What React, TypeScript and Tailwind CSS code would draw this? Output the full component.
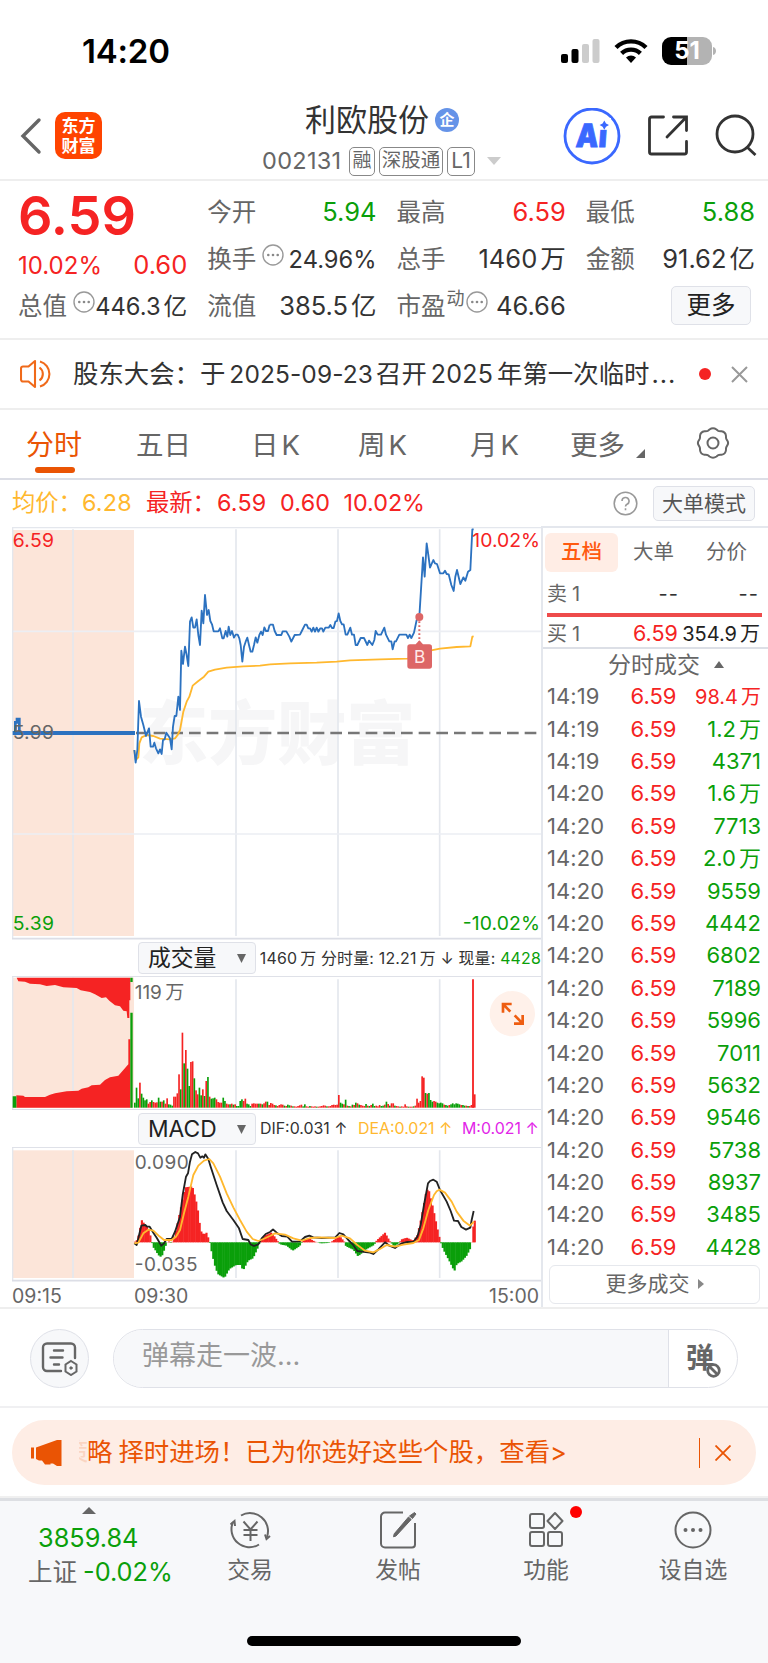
import type { ReactNode } from "react"

type Trade = { time: string; price: string; volume: string; up?: boolean }

const trades: Trade[] = [
  { time: "14:19", price: "6.59", volume: "98.4万", up: true },
  { time: "14:19", price: "6.59", volume: "1.2万" },
  { time: "14:19", price: "6.59", volume: "4371" },
  { time: "14:20", price: "6.59", volume: "1.6万" },
  { time: "14:20", price: "6.59", volume: "7713" },
  { time: "14:20", price: "6.59", volume: "2.0万" },
  { time: "14:20", price: "6.59", volume: "9559" },
  { time: "14:20", price: "6.59", volume: "4442" },
  { time: "14:20", price: "6.59", volume: "6802" },
  { time: "14:20", price: "6.59", volume: "7189" },
  { time: "14:20", price: "6.59", volume: "5996" },
  { time: "14:20", price: "6.59", volume: "7011" },
  { time: "14:20", price: "6.59", volume: "5632" },
  { time: "14:20", price: "6.59", volume: "9546" },
  { time: "14:20", price: "6.59", volume: "5738" },
  { time: "14:20", price: "6.59", volume: "8937" },
  { time: "14:20", price: "6.59", volume: "3485" },
  { time: "14:20", price: "6.59", volume: "4428" },
]

// chart units: 3 per css pixel, the second half of the session starts at x = 810
const HALF = "translate(810 0)"

const priceA = "403,690 407,728 412,690 417,543 423,590 430,615 438,648 447,625 452,680 459,680 463,668 468,685 475,700 480,688 485,702 489,660 494,658 499,638 510,655 515,688 519,620 524,588 529,588 535,530 540,570 544,392 549,432 555,380 560,405 565,438 570,305 575,292 580,323 585,323 590,298 595,345 600,375 605,272 610,310 615,225 621,285 626,270 631,303 636,313 641,334 655,334 660,325 667,355 671,355 677,333 682,350 686,320 691,345 696,333 702,353 707,344 713,344 718,355 722,375 727,425 732,380 737,365 742,353 747,375 752,395 757,395 762,375 767,352 772,368 778,345 783,335 788,345 793,322 798,333 804,333 809,314"
const priceB = "-1,314 9,314 14,333 20,345 34,345 38,334 49,334 58,350 64,365 74,345 90,344 97,330 105,314 110,314 115,325 120,325 125,335 130,323 135,335 140,323 145,335 151,325 156,325 160,335 166,323 176,323 181,315 186,324 191,324 196,305 201,303 206,280 211,303 216,313 221,313 227,344 232,344 241,323 246,344 252,344 257,375 262,375 272,354 282,354 292,375 297,362 307,375 313,360 317,333 323,344 333,344 343,323 348,344 358,364 364,364 368,388 374,364 378,364 388,344 409,344 414,354 419,344 424,354 432,338 440,300 448,290 459,112 464,170 470,70 475,105 480,143 490,120 495,130 501,132 510,160 520,160 525,152 530,162 536,163 544,195 551,213 556,170 561,150 571,192 580,172 586,182 594,155 601,150 607,28 611,28"
const avgA = "403,690 407,720 415,712 418,670 425,652 440,645 460,648 480,656 510,658 525,655 533,645 540,630 550,575 560,545 568,530 578,497 595,483 612,470 625,455 645,449 680,443 730,439 780,437 810,433"
const avgB = "0,433 60,430 140,428 200,425 240,421 330,418 412,416 450,412 470,398 480,392 510,386 560,381 601,379 607,350 611,349"

const difA = "403,925 410,930 416,905 424,872 436,870 441,875 449,875 460,893 470,908 484,932 492,925 500,912 515,912 525,890 540,845 548,780 558,725 564,715 570,680 576,658 586,651 594,655 601,668 607,664 612,668 616,658 625,672 632,695 650,750 668,802 680,828 700,855 717,880 728,912 745,915 752,928 762,933 775,928 785,910 797,897 810,891"
const difB = "0,891 9,883 20,893 35,903 52,905 66,920 90,919 105,906 118,902 130,907 155,909 196,907 208,894 220,898 235,915 248,928 262,948 275,950 300,953 310,957 325,943 345,922 358,932 375,939 395,925 412,921 430,921 442,905 452,870 462,810 474,745 480,738 490,734 500,740 510,765 530,800 542,828 552,857 564,858 574,876 588,884 601,878 605,855 611,828"
const deaA = "403,925 415,923 430,895 445,884 460,887 478,904 492,915 515,915 528,905 540,885 552,835 565,785 580,720 595,692 612,677 628,672 640,685 660,725 680,775 700,817 720,855 740,890 758,912 775,918 790,912 810,903"
const deaB = "0,903 15,895 45,899 70,910 95,917 120,909 150,907 195,909 215,902 240,910 262,930 285,947 310,952 330,942 350,930 375,935 400,929 430,924 447,915 460,880 475,825 492,780 500,769 508,764 525,773 545,800 560,830 580,857 600,872 612,860"

// one entry per minute, negative = falling minute
const volumes = [
  -15, -60, -28, 75, -42, -30, -22, -25, 12, 17, -22, 17, 15, 16, -30, -18, 18, -22, 12, 28,
  -10, -9, -6, 33, 33, 43, 100, -55, 225, -133, 173, -117, -65, 137, 139, -88, 52, 40, -60, -37,
  55, -35, 80, -92, 33, -27, -28, -30, 25, 17, 15, 15, -30, -20, 12, 10, -10, 12, -9, 10,
  -5, -5, -20, -25, 20, 27, -12, -10, -5, 12, 13, 12, 12, -12, 12, -10, 13, 18, -18, 8,
  14, 12, 8, -7, 5, 8, 10, 9, -6, 5, -9, -7, 6, -4, 4, 3, 5, 7, 9, -4,
  -10, 4, 3, -5, 4, 3, 4, -3, 3, 4, 5, 7, 6, -4, 4, 5, 8, 9, 8, 9,
  38, -15, -12, 10, -24, 6, -5, 4, -9, 8, -15, 13, -9, 8, 6, 5, -11, 6, -5, 8,
  -12, -5, 6, 4, 8, -5, -6, 9, -18, 11, -6, 13, 13, -6, 5, 4, -3, 4, 3, 10,
  4, -3, 3, 3, -4, 6, 27, 15, 20, 94, 90, -44, 42, -44, -23, -18, 20, 18, -15, -13,
  -15, -13, 9, -8, -6, 8, -10, -13, -10, -13, -12, -10, 8, -8, -6, 6, -5, 5, 8, 10,
]

const macdKeys: [number, number][] = [
  [405, 2], [412, 8], [419, 35], [424, 68], [429, 62], [435, 50], [440, 48], [445, 42], [450, 25], [455, 1], [460, -15],
  [465, -22], [475, -38], [480, -43], [485, -43], [490, -30], [497, -10], [504, 5], [515, -4], [521, 12], [530, 45],
  [536, 75], [546, 120], [556, 165], [577, 168], [582, 150], [592, 108], [602, 35], [612, 22], [618, 32], [628, 5],
  [633, -20], [643, -65], [653, -95], [673, -107], [688, -80], [708, -68], [722, -68], [729, -85], [744, -55],
  [759, -48], [774, -15], [780, 3], [794, 20], [815, 30], [830, 8], [840, -6], [860, -10], [878, -25], [898, -12],
  [908, 3], [925, 13], [945, 2], [962, -3], [985, -2], [995, 2], [1018, 20], [1032, 3], [1038, -12], [1060, -22],
  [1074, -42], [1100, -20], [1122, -8], [1130, 6], [1155, 29], [1169, 4], [1182, -12], [1196, -3], [1205, 9],
  [1220, 14], [1240, 5], [1252, 22], [1264, 75], [1278, 150], [1285, 163], [1300, 100], [1315, 28], [1322, 0],
  [1330, -22], [1350, -60], [1363, -87], [1370, -65], [1385, -57], [1400, -40], [1414, -12], [1417, 35], [1424, 65],
]

function macdBars() {
  const bars: { x: number; v: number }[] = []
  for (let x = 405; x < 1422; x += 5.1) {
    const n = macdKeys.findIndex(([kx]) => kx > x)
    if (n < 1) continue
    const [x0, v0] = macdKeys[n - 1]
    const [x1, v1] = macdKeys[n]
    bars.push({ x, v: v0 + ((v1 - v0) * (x - x0)) / (x1 - x0) })
  }
  bars.push({ x: 1424, v: 65 })
  return bars
}

// number followed by a Chinese unit with a small gap
function Num({ children }: { children: string }) {
  const m = children.match(/^(.*?)([万亿])$/)
  if (!m) return <>{children}</>
  return (
    <>
      {m[1]}
      <span className="ml-[3px]">{m[2]}</span>
    </>
  )
}

function Dots({ className = "" }: { className?: string }) {
  return (
    <svg className={className} width="22" height="22" viewBox="0 0 22 22" fill="none" stroke="#999" strokeWidth="1.4">
      <circle cx="11" cy="11" r="10" />
      <g fill="#888" stroke="none">
        <circle cx="6.3" cy="11" r="1.3" />
        <circle cx="11" cy="11" r="1.3" />
        <circle cx="15.7" cy="11" r="1.3" />
      </g>
    </svg>
  )
}

function StatusBar() {
  return (
    <div className="flex h-[90px] justify-between pr-[51px] pl-[82px]">
      <span className="mt-[31px] text-[33px] leading-10 font-semibold tracking-[-0.2px] text-black">14:20</span>
      <div className="mt-[37px] flex h-7">
        <svg width="39" height="28" viewBox="0 0 39 28">
          <rect x="0" y="17" width="7" height="9" rx="2" />
          <rect x="10.5" y="12" width="7" height="14" rx="2" />
          <rect x="21" y="7" width="7" height="19" rx="2" fill="#ccc" />
          <rect x="31.5" y="2" width="7" height="24" rx="2" fill="#ccc" />
        </svg>
        <svg className="ml-[14px]" width="34" height="28" viewBox="0 0 34 28" fill="none" stroke="#000" strokeWidth="4.4">
          <path d="M2 10.5a21.5 21.5 0 0 1 30 0" />
          <path d="M7.6 16.4a13.6 13.6 0 0 1 18.8 0" />
          <path d="M17 26l-5-5.4a7.2 7.2 0 0 1 10 0z" fill="#000" stroke="none" />
        </svg>
        <div className="ml-[14px] flex h-7 w-[50px] items-center justify-center rounded-[9px] bg-[linear-gradient(90deg,#000_51%,#b3b3b3_51%)] text-[24px] font-bold text-white">
          51
        </div>
        <svg className="ml-[1px]" width="4" height="28" viewBox="0 0 4 28">
          <path d="M0 10c4 1 4 7 0 8z" fill="#b3b3b3" />
        </svg>
      </div>
    </div>
  )
}

function Header() {
  return (
    <div className="flex h-[91px] border-b-2 border-[#eee] pl-5">
      <svg className="mt-[27px]" width="22" height="38" viewBox="0 0 22 38" fill="none" stroke="#666" strokeWidth="3.4">
        <path d="M19 3L3 19l16 16" strokeLinecap="round" />
      </svg>
      <div className="mt-[22px] ml-[13px] flex h-[47px] w-[47px] flex-col items-center justify-center rounded-[10px] bg-[#ff4400] text-[17px] leading-[20px] font-bold text-white">
        <span>东方</span>
        <span>财富</span>
      </div>
      <div className="ml-[160px] w-[241px]">
        <div className="mt-[9px] ml-[43px] flex h-[42px] items-center">
          <span className="text-[31px] leading-10 whitespace-nowrap text-[#333]">利欧股份</span>
          <span className="ml-[6px] flex h-6 w-6 items-center justify-center rounded-full bg-[#6593e8] text-[15px] font-bold text-white">企</span>
        </div>
        <div className="mt-[5px] flex h-[30px] items-center text-[#666]">
          <span className="w-[87px] text-[23.5px] tracking-[0.3px]">002131</span>
          <span className="flex h-[29px] w-[26px] items-center justify-center rounded-[5px] border-[1.5px] border-[#888] text-[19px]">融</span>
          <span className="ml-1 flex h-[29px] w-[64px] items-center justify-center rounded-[5px] border-[1.5px] border-[#888] text-[19.5px] whitespace-nowrap">深股通</span>
          <span className="ml-1 flex h-[29px] w-[28px] items-center justify-center rounded-[5px] border-[1.5px] border-[#888] text-[21px]">L1</span>
          <svg className="ml-[12px]" width="14" height="8" viewBox="0 0 14 8">
            <path d="M0 0h14L7 8z" fill="#ccc" />
          </svg>
        </div>
      </div>
      <svg className="mt-[18px] ml-[60px] font-['Inter',sans-serif]" width="58" height="58" viewBox="0 0 58 58">
        <circle cx="29" cy="28" r="27" fill="none" stroke="#3a68ff" strokeWidth="2.8" />
        <text x="15" y="38.600" fontSize="32" fontWeight="900" textLength="31" lengthAdjust="spacingAndGlyphs" fill="#3a68ff" stroke="#3a68ff" strokeWidth=".8" transform="skewX(-4)">Ai</text>
        <rect x="34" y="10" width="14" height="11.800" fill="#fff" />
        <path d="M41.300 12.500l1.700 2.900 3 1.700-3 1.700-1.700 2.900-1.700-2.900-3-1.700 3-1.700z" fill="#3a68ff" />
      </svg>
      <svg className="mt-[24px] ml-[26px]" width="42" height="42" viewBox="0 0 42 42" fill="none" stroke="#333" strokeWidth="2.8" strokeLinecap="round">
        <path d="M16.500 3H4.500a2 2 0 0 0-2 2v33a2 2 0 0 0 2 2h33a2 2 0 0 0 2-2V27.500" />
        <path d="M26.500 3h13V16.500M39 3.500L20 23" />
      </svg>
      <svg className="mt-[24px] ml-[26px]" width="42" height="42" viewBox="0 0 42 42" fill="none" stroke="#333" strokeWidth="2.8">
        <circle cx="20" cy="20" r="18" />
        <path d="M32 33L40.500 41" />
      </svg>
    </div>
  )
}

type CellProps = { label: ReactNode; children: string; color?: string; size?: string }

function Cell({ label, children, color = "text-[#333]", size = "text-[25.5px]" }: CellProps) {
  return (
    <div className="flex h-[47px] items-center justify-between whitespace-nowrap">
      <span className="flex text-[24.5px] text-[#666]">{label}</span>
      <span className={size + " " + color}>
        <Num>{children}</Num>
      </span>
    </div>
  )
}

function Quote() {
  return (
    <div className="grid h-[159px] grid-cols-4 gap-x-5 border-b-2 border-[#eee] pt-[8px] pr-[13px] pl-[18px]">
      <div>
        <div className="flex h-[52px] items-center text-[54px] font-semibold text-[#f52323]">6.59</div>
        <div className="flex h-[42px] items-center justify-between pt-[7px] text-[25.5px] text-[#f52323]">
          <span className="text-[24px]">10.02%</span>
          <span>0.60</span>
        </div>
        <Cell size="text-[23.7px]" label={<>总值<Dots className="mt-[3px] ml-[6px]" /></>}>446.3亿</Cell>
      </div>
      <div>
        <Cell label="今开" color="text-[#0a9f0a]">5.94</Cell>
        <Cell size="text-[23.7px]" label={<>换手<Dots className="mt-[3px] ml-[6px]" /></>}>24.96%</Cell>
        <Cell label="流值">385.5亿</Cell>
      </div>
      <div>
        <Cell label="最高" color="text-[#f52323]">6.59</Cell>
        <Cell label="总手">1460万</Cell>
        <Cell label={<>市盈<sup className="top-0 mt-[-1px] ml-[1px] text-[18px] leading-6">动</sup><Dots className="mt-[3px] ml-[1px]" /></>}>46.66</Cell>
      </div>
      <div>
        <Cell label="最低" color="text-[#0a9f0a]">5.88</Cell>
        <Cell label="金额">91.62亿</Cell>
        <button className="mt-[3px] mr-[4px] ml-auto flex h-[39px] w-[80px] items-center justify-center rounded-[5px] border-[1.5px] border-[#dfe1e8] bg-[#f7f8fa] text-[24.500px] text-[#222]">更多</button>
      </div>
    </div>
  )
}

function Notice() {
  return (
    <div className="flex h-[70px] items-center border-b-2 border-[#eee] pl-5">
      <svg width="33" height="30" viewBox="0 0 33 30" fill="none" stroke="#f06a1a" strokeWidth="2.1" strokeLinejoin="round">
        <path d="M15 2v26l-6.500-5.500H3a2 2 0 0 1-2-2v-11a2 2 0 0 1 2-2h5.500z" />
        <path d="M19.500 8.500a8 8 0 0 1 0 13M20 2.500a13 13 0 0 1 0 25" />
      </svg>
      <p className="ml-[20px] w-[606px] text-[25.400px] whitespace-nowrap text-[#333]">
        股东大会：于<span className="mr-[3px] ml-[4px] text-[24.500px] tracking-[0.1px]">2025-09-23</span>召开<span className="mx-[4px] text-[25px] tracking-[0.2px]">2025</span>年第一次临时<span className="ml-[2px] tracking-[1px]">...</span>
      </p>
      <span className="ml-[20px] h-3 w-3 rounded-full bg-[#f52323]" />
      <svg className="ml-[20px]" width="17" height="17" viewBox="0 0 17 17" stroke="#999" strokeWidth="2">
        <path d="M1 1l15 15M16 1L1 16" />
      </svg>
    </div>
  )
}

function Tabs() {
  return (
    <div className="flex h-[70px] border-b-2 border-[#dcdee6] text-[27.500px] whitespace-nowrap text-[#666]">
      <div className="ml-[26px] flex w-[110px] flex-col text-[#ea5404]">
        <span className="mt-[15px] text-[28px] leading-10">分时</span>
        <span className="mt-[2px] ml-[9px] h-[6px] w-10 rounded-full bg-[#ea5404]" />
      </div>
      <span className="mt-[15px] w-[115px] leading-10">五日</span>
      <span className="mt-[15px] w-[107px] leading-10">日<span className="ml-[3px]">K</span></span>
      <span className="mt-[15px] w-[112px] leading-10">周<span className="ml-[3px]">K</span></span>
      <span className="mt-[15px] w-[100px] leading-10">月<span className="ml-[3px]">K</span></span>
      <span className="mt-[15px] w-[66px] leading-10">更多</span>
      <svg className="mt-[39px]" width="9" height="9" viewBox="0 0 9 9">
        <path d="M9 0v9H0z" fill="#666" />
      </svg>
      <svg className="mt-[16px] ml-[51px]" width="34" height="34" viewBox="0 0 34 34" fill="none" stroke="#666" strokeWidth="2">
        <path d="M13.500 3.500q3.500-2.500 7 0l1.500 1.300q1 .7 3.500.5 4 .5 4.500 4.700-.3 2.500 1 4.200 2.200 2.800 0 5.600-1.300 1.700-1 4.200-.5 4.200-4.500 4.700-2.500-.2-3.500.5l-1.500 1.300q-3.500 2.500-7 0L12 29.200q-1-.7-3.500-.5-4-.5-4.500-4.700.3-2.500-1-4.200-2.200-2.800 0-5.600 1.300-1.700 1-4.200.5-4.200 4.500-4.700 2.500.2 3.500-.5z" strokeLinejoin="round" />
        <circle cx="17" cy="17" r="5.500" />
      </svg>
    </div>
  )
}

function PriceInfo() {
  return (
    <div className="flex h-[47px] items-center pr-[13px] pl-3 text-[23.300px] whitespace-nowrap text-[#f52323]">
      <span className="w-[70px] text-[#ffb82e]">均价：</span>
      <span className="w-[64px] tracking-[0.200px] text-[#ffb82e]">6.28</span>
      <span className="w-[71px]">最新：</span>
      <span className="w-[63px] tracking-[0.200px]">6.59</span>
      <span className="w-[63.500px] tracking-[0.200px]">0.60</span>
      <span>10.02%</span>
      <svg className="ml-auto" width="25" height="25" viewBox="0 0 25 25" fill="none" stroke="#999" strokeWidth="1.6">
        <circle cx="12.500" cy="12.500" r="11.300" />
        <path d="M9 10a3.500 3.500 0 1 1 5 3.200q-1.500.8-1.500 2.300M12.500 17.300v2" />
      </svg>
      <button className="ml-[15px] flex h-[35px] w-[102px] items-center justify-center rounded-[5px] border-[1.5px] border-[#dfe1e8] bg-[#f7f8fa] text-[21px] text-[#555]">大单模式</button>
    </div>
  )
}

function PriceChart() {
  return (
    <svg className="block font-['Inter','Noto_Sans_CJK_SC',sans-serif]" width="529" height="413" viewBox="36 21 1587 1239">
      <rect x="38" y="30" width="364" height="1218" fill="#fce5d9" />
      <text x="418" y="716" fontSize="207" fontWeight="900" fill="#f6f6f7">东方财富</text>
      <g stroke="#e4e7ed" strokeWidth="5">
        <path d="M219 28V1248M708 28V1248M1014 28V1248M1319 28V1248" />
        <path d="M36 334H1626M36 942H1626" stroke="#eceef3" />
        <path d="M36 23H1626M38 23V1257" strokeWidth="4" />
        <path d="M36 1256H1626" stroke="#dcdee6" />
      </g>
      <path d="M408 639H1614" stroke="#777" strokeWidth="7" strokeDasharray="35 18" />
      <g fill="none" strokeWidth="5.500" strokeLinejoin="round">
        <polyline points={avgA} stroke="#ffb82e" />
        <polyline points={avgB} stroke="#ffb82e" transform={HALF} />
        <polyline points={priceA} stroke="#2c72c0" />
        <polyline points={priceB} stroke="#2c72c0" transform={HALF} />
      </g>
      <path d="M38 639H405" stroke="#2c72c0" strokeWidth="12" />
      <path d="M46 639V607h5V597h7V634" stroke="#2c72c0" strokeWidth="8" fill="none" />
      <path d="M1258 292V365" stroke="#dd6666" strokeWidth="6" strokeDasharray="5 7" />
      <circle cx="1258" cy="291" r="12" fill="#dd6666" />
      <path d="M1230 373h17l11-12 11 12h19q8 0 8 8v57q0 8-8 8h-58q-8 0-8-8v-57q0-8 8-8z" fill="#dd6666" />
      <text x="1259" y="428" fontSize="52" fill="#ffe9e9" textAnchor="middle">B</text>
      <g fontSize="58">
        <text x="38" y="80" fill="#f52323" textLength="124">6.59</text>
        <text x="38" y="657" fill="#666" textLength="124">5.99</text>
        <text x="38" y="1231" fill="#0a9f0a" textLength="124">5.39</text>
        <text x="1620" y="80" fill="#f52323" textAnchor="end" textLength="203">10.02%</text>
        <text x="1620" y="1231" fill="#0a9f0a" textAnchor="end" textLength="232">-10.02%</text>
      </g>
    </svg>
  )
}

function IndicatorBar({ name, className, children }: { name: string; className: string; children: ReactNode }) {
  return (
    <div className={"flex items-center border-b border-[#dfe1e8] pl-[126px] whitespace-nowrap " + className}>
      <button className="flex h-8 w-[118px] items-center justify-between rounded-[4px] border-[1.5px] border-[#dfe1e8] bg-[#f7f8fa] pt-[1px] pr-[9px] pl-[9px] text-[22.800px] text-[#222]">
        {name}
        <svg width="9" height="9" viewBox="0 0 9 9">
          <path d="M0 0h9L4.500 9z" fill="#666" />
        </svg>
      </button>
      {children}
    </div>
  )
}

function VolumeChart() {
  return (
    <svg className="block font-['Inter','Noto_Sans_CJK_SC',sans-serif]" width="529" height="133" viewBox="36 125 1587 399">
      <rect x="38" y="127" width="364" height="390" fill="#fce5d9" />
      <path d="M219 127V517M708 132V517M1014 132V517M1319 132V517" stroke="#e4e7ed" strokeWidth="5" />
      <path d="M38 125V523" stroke="#e4e7ed" strokeWidth="4" />
      <path d="M50 127L55 138 75 139 90 145 120 147 140 152 165 149 190 156 230 158 242 165 270 170 285 177 305 188 318 186 328 196 345 210 360 213 370 226 380 228 382 248H388V195H391V127z" fill="#f52323" />
      <path d="M49 480L70 481 75 485H135L150 478 165 474 200 468 235 466 245 460 265 456 275 450 300 448 315 434 330 426 355 421 370 404 385 387V312H391V517H49z" fill="#f52323" />
      <path d="M38 483H49V517H38zM391 232H398V517H391zM391 127H398V140H391z" fill="#0a9f0a" />
      {volumes.map((v, i) => (
        <rect key={i} x={402 + i * 5.1} y={517 - Math.abs(v)} width="5" height={Math.abs(v)} fill={v < 0 ? "#0a9f0a" : "#f52323"} />
      ))}
      <path d="M1419 132V517" stroke="#f52323" strokeWidth="5.500" />
      <path d="M1424 477V517" stroke="#f52323" strokeWidth="5.500" />
      <path d="M36 523H1626" stroke="#dcdee6" strokeWidth="4" />
      <text x="404" y="190" fontSize="57" fill="#666">119<tspan dx="10">万</tspan></text>
      <circle cx="1537" cy="235" r="68" fill="#fff1ea" />
      <g stroke="#ee5d11" strokeWidth="8" fill="none">
        <path d="M1509 232V206H1535M1509 206L1531 229" />
        <path d="M1568 239V265H1542M1568 265L1544 240" />
      </g>
    </svg>
  )
}

function MacdChart() {
  return (
    <svg className="block font-['Inter','Noto_Sans_CJK_SC',sans-serif]" width="529" height="134" viewBox="36 639 1587 402">
      <rect x="38" y="646" width="364" height="383" fill="#fce5d9" />
      <path d="M219 646V1029M708 646V1029M1014 646V1029M1319 646V1029" stroke="#e4e7ed" strokeWidth="5" />
      <path d="M38 638V1036" stroke="#e4e7ed" strokeWidth="4" />
      {macdBars().map(({ x, v }) => (
        <rect key={x} x={x - 3} y={v > 0 ? 922 - v : 922} width="6.500" height={Math.abs(v)} fill={v > 0 ? "#f52323" : "#0a9f0a"} />
      ))}
      <g fontSize="57" fill="#666">
        <text x="404" y="702" textLength="162">0.090</text>
        <text x="404" y="1009" textLength="189">-0.035</text>
      </g>
      <g fill="none" strokeWidth="5.500" strokeLinejoin="round">
        <polyline points={difA} stroke="#222" />
        <polyline points={difB} stroke="#222" transform={HALF} />
        <polyline points={deaA} stroke="#ffb82e" />
        <polyline points={deaB} stroke="#ffb82e" transform={HALF} />
      </g>
      <path d="M36 1037H1626" stroke="#dcdee6" strokeWidth="5" />
    </svg>
  )
}

function OrderBook() {
  return (
    <div className="mt-[-1px] w-[227px] border-t-2 border-l-2 border-[#e4e7ed] text-[22px] whitespace-nowrap text-[#666]">
      <div className="mt-[4px] ml-[2px] flex h-[40px] items-center text-[20.500px]">
        <span className="flex h-[39px] w-[73px] items-center justify-center rounded-[6px] bg-[#ffede5] font-medium text-[#ff5a10]">五档</span>
        <span className="ml-[15px]">大单</span>
        <span className="ml-[32px]">分价</span>
      </div>
      <div className="flex h-[41px] items-center pt-[2px] pr-[9px] pl-1 text-[20px]">
        <span className="w-[90px]">卖<span className="ml-[5px]">1</span></span>
        <span className="w-[42px] text-right tracking-[1px] text-[#333]">--</span>
        <span className="ml-auto tracking-[1px] text-[#333]">--</span>
      </div>
      <div className="ml-[4px] h-1 w-[215px] bg-[#ee4b4b]" />
      <div className="flex h-[32px] items-center border-b-2 border-[#dcdfe6] pt-[3px] pr-[8px] pl-1 text-[20px]">
        <span className="w-[86px]">买<span className="ml-[5px]">1</span></span>
        <span className="text-[21.500px] text-[#f52323]">6.59</span>
        <span className="ml-auto text-[20px] text-[#222]"><Num>354.9万</Num></span>
      </div>
      <div className="flex h-[31.500px] items-center pl-[65px] text-[23px]">
        分时成交
        <svg className="ml-[14px]" width="10" height="7" viewBox="0 0 10 7">
          <path d="M0 7h10L5 0z" fill="#666" />
        </svg>
      </div>
      {trades.map((t, i) => (
        <div key={i} className="flex h-[32.4px] items-center pr-[7px] pl-1">
          <span className="w-[83.500px] tracking-[0.100px]">{t.time}</span>
          <span className="text-[#f52323]">{t.price}</span>
          <span className={"ml-auto " + (t.up ? "text-[20px] text-[#f52323]" : "text-[#0a9f0a]")}>
            <Num>{t.volume}</Num>
          </span>
        </div>
      ))}
      <button className="mt-[1px] ml-[6px] flex h-[39px] w-[211px] items-center justify-center rounded-[6px] border-[1.5px] border-[#e6e8ed] text-[21px]">
        更多成交
        <svg className="ml-[8px]" width="6" height="10" viewBox="0 0 6 10">
          <path d="M0 0v10l6-5z" fill="#888" />
        </svg>
      </button>
    </div>
  )
}

function Charts() {
  return (
    <div className="flex h-[782px] border-b-2 border-[#eee] pl-3">
      <div className="w-[529px]">
        <PriceChart />
        <IndicatorBar name="成交量" className="h-[37px]">
          <p className="ml-[4px] pt-[2px] text-[15.900px] tracking-[0.200px] text-[#333]">
            <Num>1460万</Num> 分时量: <Num>12.21万</Num> ↓ 现量: <span className="text-[#0a9f0a]">4428</span>
          </p>
        </IndicatorBar>
        <VolumeChart />
        <IndicatorBar name="MACD" className="h-[38px]">
          <p className="ml-[4px] flex pt-[1px] text-[15.900px]">
            <span className="w-[98px] text-[#333]">DIF:0.031 ↑</span>
            <span className="w-[104px] text-[#ffb82e]">DEA:0.021 ↑</span>
            <span className="text-[#e224e8]">M:0.021 ↑</span>
          </p>
        </IndicatorBar>
        <MacdChart />
        <div className="flex h-7 items-center pt-[2px] text-[19.500px] text-[#666]">
          <span className="w-[122px]">09:15</span>
          <span>09:30</span>
          <span className="mr-[2px] ml-auto">15:00</span>
        </div>
      </div>
      <OrderBook />
    </div>
  )
}

function Danmu() {
  return (
    <div className="flex h-[99px] items-center border-b-2 border-[#f0f0f2] pt-[2px] pl-[30px]">
      <button className="flex h-[59px] w-[59px] items-center justify-center rounded-full border-[1.5px] border-[#dfe1e8] bg-[#f7f8fa]">
        <svg width="38" height="34" viewBox="0 0 38 34" fill="none" stroke="#666" strokeWidth="2.4" strokeLinecap="round">
          <path d="M20 28.500H6a4 4 0 0 1-4-4V5a4 4 0 0 1 4-4h24a4 4 0 0 1 4 4v10.500" transform="translate(0 .5)" />
          <path d="M13 8.500h9M9.500 15.500h12M13 22.500h5" />
          <path d="M30 19l5.500 3.500v7L30 33l-5.500-3.500v-7z" strokeWidth="2" />
          <circle cx="30" cy="26" r="1.200" fill="#666" strokeWidth="1" />
        </svg>
      </button>
      <div className="ml-6 flex h-[59px] w-[625px] rounded-full border-[1.5px] border-[#dfe1e8]">
        <div className="flex w-[555px] items-center rounded-l-full border-r-[1.5px] border-[#dfe1e8] bg-[#f7f8fa] pb-1 pl-[28px] text-[27px] text-[#999]">弹幕走一波...</div>
        <div className="relative flex flex-1 items-center pb-[2px] pl-[17px] text-[28px] font-bold text-[#666]">
          弹
          <svg className="absolute top-[32px] left-[36px]" width="17" height="17" viewBox="0 0 17 17" fill="#fff" stroke="#666" strokeWidth="2.8">
            <circle cx="8.500" cy="8.500" r="5.800" />
            <path d="M4.500 4.500l8 8" />
          </svg>
        </div>
      </div>
    </div>
  )
}

function Banner() {
  return (
    <div className="h-[90px] border-b-2 border-[#f0f0f0] px-3 pt-[12px]">
      <div className="flex h-[65px] items-center rounded-[33px] bg-[#feede5] pl-[19px] text-[25.400px] whitespace-nowrap text-[#ea5404]">
        <svg width="31" height="28" viewBox="0 0 31 28" fill="#ea5404">
          <path d="M0 8.500h3v11H0zM5 8.500L26 1h4.500v26H26l-4-2.500h-2.500v1h-5.500L11 21.500H8L5 20z" />
        </svg>
        <span className="ml-[17px] w-[8px] overflow-hidden">
          <span className="-ml-4 block opacity-15">策</span>
        </span>
        <span>略</span>
        <span className="ml-[6px]">择时进场！已为你选好这些个股，查看&gt;</span>
        <span className="ml-auto h-[30px] w-[1.5px] bg-[#ea5404]" />
        <svg className="mr-[25px] ml-[15px]" width="16" height="16" viewBox="0 0 16 16" stroke="#ea5404" strokeWidth="1.8">
          <path d="M.5.500l15 15M15.500.500l-15 15" />
        </svg>
      </div>
    </div>
  )
}

function NavItem({ label, children, className }: { label: string; children: ReactNode; className: string }) {
  return (
    <div className={"flex w-[80px] flex-col items-center text-[22.800px] whitespace-nowrap text-[#666] " + className}>
      <svg className="mt-[9px] block" width="44" height="40" viewBox="0 0 44 40" fill="none" stroke="#666" strokeWidth="2">
        {children}
      </svg>
      <span className="mt-[4px] leading-8">{label}</span>
    </div>
  )
}

function BottomNav() {
  return (
    <div className="relative h-[165px] border-t-[3px] border-[#dddfe3] bg-[#f7f8fa]">
      <div className="flex">
        <div className="ml-[28px] flex w-[146px] flex-col text-[25.300px] text-[#0a9f0a]">
          <svg className="mt-[6px] ml-[54px] block" width="14" height="7" viewBox="0 0 14 7">
            <path d="M0 7h14L7 0z" fill="#666" />
          </svg>
          <span className="mt-[8px] ml-[10px] leading-8">3859.84</span>
          <span className="mt-[2px] leading-8 whitespace-nowrap">
            <span className="mr-[6px] text-[24.500px] text-[#666]">上证</span>-0.02%
          </span>
        </div>
        <NavItem label="交易" className="ml-[36px]">
          <path d="M13 5.500A18 18 0 0 1 39 27M31 34.500A18 18 0 0 1 5 12" />
          <path d="M2.500 14.500L6.500 11l.5 5M37 24.500l1.500 4.500 3.500-3" />
          <path d="M15.500 11.500l7 8 7-8M15.500 20h14M15.500 25h14M22.500 19.500V31" />
        </NavItem>
        <NavItem label="发帖" className="ml-[68px]">
          <path d="M27 2.500H9a4 4 0 0 0-4 4v27a4 4 0 0 0 4 4h27a3 3 0 0 0 3-3V13" />
          <path d="M38.500 2.500l1.500 1.500-3.500 4.500-3-2.500zM32.500 7l2.700 2.500L20 26l-2.500.8.700-3z" fill="#666" strokeWidth="1" />
        </NavItem>
        <NavItem label="功能" className="ml-[68px]">
          <rect x="6" y="4" width="14" height="14" rx="2" />
          <rect x="6" y="22" width="14" height="14" rx="2" />
          <rect x="24" y="22" width="14" height="14" rx="2" />
          <path d="M31 3l7.500 8-7.500 8-7.500-8z" strokeLinejoin="round" />
        </NavItem>
        <NavItem label="设自选" className="ml-[67px]">
          <circle cx="22" cy="20" r="17.500" />
          <g fill="#666" stroke="none">
            <circle cx="14.500" cy="20" r="2" />
            <circle cx="22" cy="20" r="2" />
            <circle cx="29.500" cy="20" r="2" />
          </g>
        </NavItem>
      </div>
      <span className="absolute top-[5px] left-[570px] h-3 w-3 rounded-full bg-[#ff0000]" />
      <div className="absolute bottom-[17px] left-[247px] h-[10px] w-[274px] rounded-full bg-black" />
    </div>
  )
}

export default function App() {
  return (
    <div className="h-[1663px] w-[768px] overflow-hidden bg-white font-['Inter','Noto_Sans_CJK_SC',sans-serif]">
      <StatusBar />
      <Header />
      <Quote />
      <Notice />
      <Tabs />
      <PriceInfo />
      <Charts />
      <Danmu />
      <Banner />
      <BottomNav />
    </div>
  )
}
